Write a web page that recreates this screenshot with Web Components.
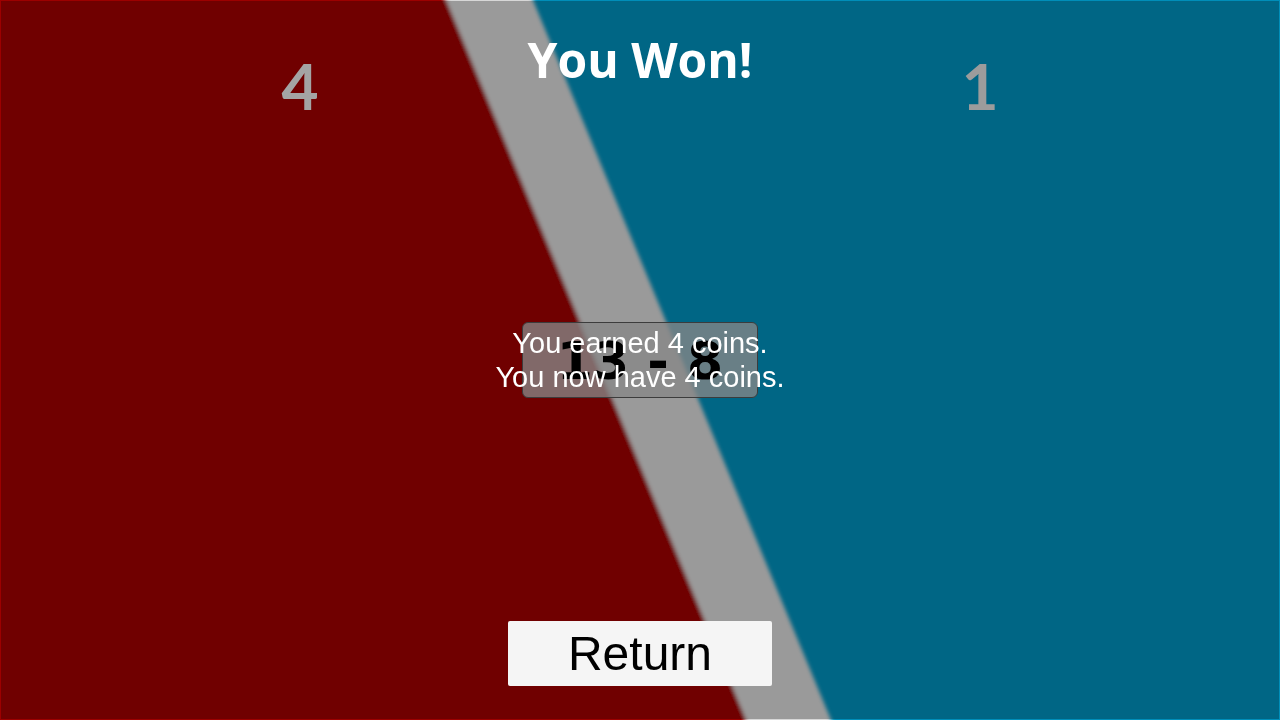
<!DOCTYPE html>
<html lang="en">
<head>
<meta charset="utf-8">
<meta name="viewport" content="width=device-width, initial-scale=1">
<title>You Won!</title>
<style>
  html, body { height: 100%; margin: 0; }
  body { background: #006685; font-family: "Liberation Sans", Arial, sans-serif; }
</style>
</head>
<body>
<game-screen>
  <court-backdrop slot="backdrop"></court-backdrop>
  <score-board slot="board">
    <span slot="left">4</span>
    <span slot="right">1</span>
    <span slot="total">13 - 8</span>
  </score-board>
  <result-panel slot="result">
    <span slot="title">You Won!</span>
    <span slot="earned">You earned 4 coins.</span>
    <span slot="balance">You now have 4 coins.</span>
    <span slot="action">Return</span>
  </result-panel>
</game-screen>

<script>
  class BaseElement extends HTMLElement {
    constructor() {
      super();
      this.attachShadow({ mode: "open" }).innerHTML = this.constructor.markup;
    }
  }

  // Stacks the backdrop, the match scores and the result in one grid cell.
  class GameScreen extends BaseElement {
    static markup = `
      <style>
        :host { display: grid; min-height: 100vh; overflow: hidden; }
        ::slotted(*) { grid-area: 1 / 1; min-width: 0; }
      </style>
      <slot name="backdrop"></slot>
      <slot name="board"></slot>
      <slot name="result"></slot>`;
  }

  class CourtBackdrop extends BaseElement {
    static markup = `
      <style>
        :host { display: grid; overflow: hidden; contain: size; }
        svg { display: block; width: 100%; height: 100%; }
        .edge { mix-blend-mode: color-dodge; }
      </style>
      <svg viewBox="0 0 1280 720" preserveAspectRatio="none" aria-hidden="true">
        <defs>
          <filter id="soft" x="-5%" y="-5%" width="110%" height="110%"><feGaussianBlur stdDeviation="2 0"/></filter>
        </defs>
        <rect width="1280" height="720" fill="#006685"/>
        <g filter="url(#soft)">
          <path d="M-40 -24H523L841 744H-40Z" fill="#9a9a9a"/>
          <path d="M-40 -24H436L756 744H-40Z" fill="#700000"/>
        </g>
        <rect class="edge" x=".5" y=".5" width="1279" height="719" stroke="#484848" fill="none"/>
      </svg>`;
  }

  class ScoreBoard extends BaseElement {
    static markup = `
      <style>
        :host {
          display: grid;
          grid-template: 1fr auto 1fr / 1fr 236px 1fr;
          font-family: Lato, sans-serif;
          font-weight: 700;
        }
        .side { padding-top: 48px; font-size: 64px; line-height: 76px; text-align: center; color: #9c9c9c; }
        .left { grid-area: 1 / 1; padding-left: 78px; color: #a4a4a4; }
        .right { grid-area: 1 / 3; padding-right: 78px; }
        .total {
          grid-area: 2 / 2;
          box-sizing: border-box;
          height: 76px;
          border: 1px solid #3c3c3c;
          border-radius: 6px;
          background: rgb(134 134 134 / .78);
          color: #000;
          font-family: "DejaVu Sans", sans-serif;
          font-size: 52px;
          line-height: 76px;
          text-align: center;
          white-space: nowrap;
        }
      </style>
      <div class="side left"><slot name="left"></slot></div>
      <div class="total"><slot name="total"></slot></div>
      <div class="side right"><slot name="right"></slot></div>`;
  }

  class ResultPanel extends BaseElement {
    static markup = `
      <style>
        :host {
          display: grid;
          grid-template-rows: 1fr auto 1fr;
          justify-items: center;
          text-align: center;
          color: #fff;
        }
        h1 { margin: 0; padding-top: 28px; font: 700 48px/64px "Open Sans", sans-serif; }
        p { margin: 0; font-size: 29px; line-height: 34px; }
        p span { display: block; }
        button {
          align-self: end;
          width: 264px;
          height: 65px;
          margin: 0 0 34px;
          padding: 0;
          border: 0;
          border-radius: 2px;
          background: #f5f5f5;
          color: #000;
          font: 48px/66px "Liberation Sans", Arial, sans-serif;
          cursor: pointer;
        }
      </style>
      <h1><slot name="title"></slot></h1>
      <p><span><slot name="earned"></slot></span><span><slot name="balance"></slot></span></p>
      <button type="button"><slot name="action"></slot></button>`;
  }

  customElements.define("game-screen", GameScreen);
  customElements.define("court-backdrop", CourtBackdrop);
  customElements.define("score-board", ScoreBoard);
  customElements.define("result-panel", ResultPanel);
</script>
</body>
</html>
